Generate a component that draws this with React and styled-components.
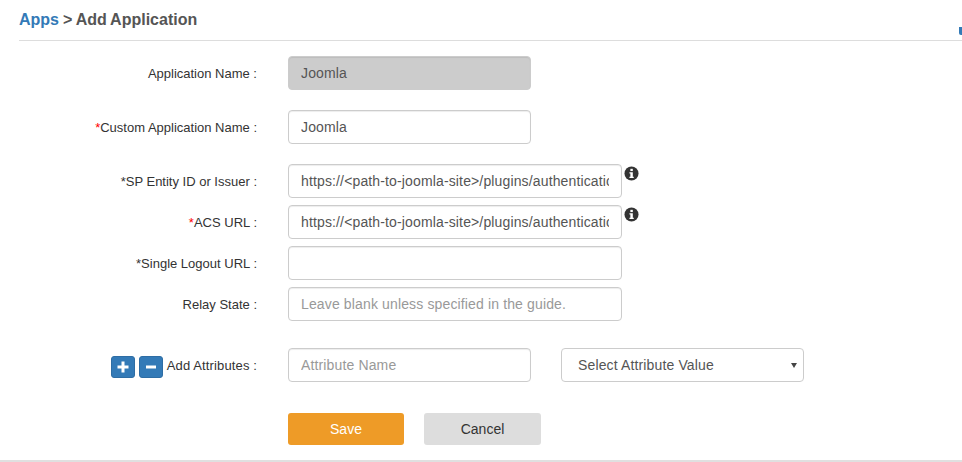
import React from "react";
import styled, { createGlobalStyle } from "styled-components";

const GlobalStyle = createGlobalStyle`
  html, body {
    margin: 0;
    background: #fff;
    overflow: hidden;
  }
  body {
    font-family: "Liberation Sans", Arial, sans-serif;
    font-size: 13px;
    color: #333;
  }
`;

const Page = styled.div`
  position: relative;
  width: 962px;
  height: 462px;
  box-sizing: border-box;
  padding-left: 19px;
  border-bottom: 2px solid #e0e0e0;
  overflow: hidden;
`;

const Header = styled.div`
  height: 40px;
  border-bottom: 1px solid #ddd;
  line-height: 39px;
  font-size: 16px;
  font-weight: bold;
  word-spacing: -0.5px;
  color: #555;
`;

const Crumb = styled.a`
  color: #337ab7;
`;

const EdgeTab = styled.span`
  position: absolute;
  top: 27px;
  right: 0;
  width: 3px;
  height: 8px;
  background: #337ab7;
  border-radius: 0 0 0 2px;
`;

const Form = styled.form`
  display: flex;
  flex-direction: column;
  padding-top: 15px;
`;

const Row = styled.div`
  display: grid;
  grid-template-columns: 238px auto;
  column-gap: 31px;
  justify-content: start;
  align-items: center;
  margin-bottom: ${(p) => p.$gap ?? 7}px;
`;

const Label = styled.label`
  display: flex;
  justify-content: flex-end;
  align-items: center;
  color: #333;
  white-space: nowrap;
`;

const Star = styled.span`
  color: #f00;
`;

const Controls = styled.div`
  display: flex;
  align-items: flex-start;
`;

const Input = styled.input`
  width: ${(p) => p.$w ?? 334}px;
  height: 34px;
  box-sizing: border-box;
  padding: 0 12px;
  border: 1px solid #ccc;
  border-radius: 4px;
  background: ${(p) => (p.disabled ? "#ccc" : "#fff")};
  font: 14px "Liberation Sans", Arial, sans-serif;
  letter-spacing: 0.14px;
  color: #555;
  outline: none;
  box-shadow: inset 0 1px 1px rgba(0, 0, 0, 0.075);

  &::placeholder {
    color: #999;
    opacity: 1;
  }
`;

const InfoIcon = styled.svg`
  width: 15px;
  height: 15px;
  margin: 2px 0 0 2px;
  color: #333;
`;

const SelectBox = styled.div`
  position: relative;
  margin-left: 30px;
  width: 243px;
  height: 34px;
`;

const Select = styled.select`
  appearance: none;
  width: 100%;
  height: 100%;
  box-sizing: border-box;
  padding: 0 16px;
  border: 1px solid #ccc;
  border-radius: 4px;
  background: #fff;
  font: 14px "Liberation Sans", Arial, sans-serif;
  letter-spacing: 0.14px;
  color: #555;
`;

const Caret = styled.span`
  position: absolute;
  top: 15px;
  right: 7px;
  border-left: 3px solid transparent;
  border-right: 3px solid transparent;
  border-top: 5px solid #444;
  pointer-events: none;
`;

const SquareButton = styled.button`
  display: inline-flex;
  align-items: center;
  justify-content: center;
  width: 24px;
  height: 22px;
  margin: 4px 4px 0 0;
  padding: 0;
  border: 1px solid #2e6da4;
  border-radius: 3px;
  background: #337ab7;
  color: #fff;
`;

const AttributeText = styled.span`
  letter-spacing: 0.13px;
`;

const Actions = styled.div`
  display: flex;
  gap: 20px;
  margin-left: 269px;
`;

const ActionButton = styled.button`
  width: ${(p) => p.$w}px;
  height: 32px;
  padding: 0;
  border: 0;
  border-radius: 3px;
  background: ${(p) => p.$bg};
  color: ${(p) => p.$fg};
  font: 14px "Liberation Sans", Arial, sans-serif;
`;

const Info = () => (
  <InfoIcon viewBox="0 0 16 16">
    <circle cx="8" cy="8" r="7.5" fill="currentColor" />
    <rect x="6.8" y="3" width="2.6" height="2.4" fill="#fff" />
    <path d="M5.8 6.6h3.6v4.9h1v1.4H5.8v-1.4h1V8H5.8z" fill="#fff" />
  </InfoIcon>
);

const Plus = () => (
  <svg width="12" height="12" viewBox="0 0 12 12">
    <path d="M4.5 0.500h3v4H11.500v3H7.500v4h-3v-4H0.500v-3h4z" fill="currentColor" />
  </svg>
);

const Minus = () => (
  <svg width="12" height="12" viewBox="0 0 12 12">
    <rect x="1" y="4.500" width="10" height="3" fill="currentColor" />
  </svg>
);

const PATH = "https://<path-to-joomla-site>/plugins/authentication/miniorangesaml";

export default function App() {
  return (
    <Page>
      <GlobalStyle />
      <Header>
        <Crumb>Apps</Crumb> &gt; Add Application
      </Header>
      <EdgeTab />
      <Form>
        <Row $gap={20}>
          <Label>Application Name :</Label>
          <Controls>
            <Input $w={243} disabled value="Joomla" readOnly />
          </Controls>
        </Row>
        <Row $gap={20}>
          <Label>
            <Star>*</Star>Custom Application Name :
          </Label>
          <Controls>
            <Input $w={243} value="Joomla" readOnly />
          </Controls>
        </Row>
        <Row>
          <Label>*SP Entity ID or Issuer :</Label>
          <Controls>
            <Input value={PATH} readOnly />
            <Info />
          </Controls>
        </Row>
        <Row>
          <Label>
            <Star>*</Star>ACS URL :
          </Label>
          <Controls>
            <Input value={PATH} readOnly />
            <Info />
          </Controls>
        </Row>
        <Row>
          <Label>*Single Logout URL :</Label>
          <Controls>
            <Input value="" readOnly />
          </Controls>
        </Row>
        <Row $gap={27}>
          <Label>Relay State :</Label>
          <Controls>
            <Input placeholder="Leave blank unless specified in the guide." />
          </Controls>
        </Row>
        <Row $gap={31}>
          <Label>
            <SquareButton type="button">
              <Plus />
            </SquareButton>
            <SquareButton type="button">
              <Minus />
            </SquareButton>
            <AttributeText>Add Attributes :</AttributeText>
          </Label>
          <Controls>
            <Input $w={243} placeholder="Attribute Name" />
            <SelectBox>
              <Select>
                <option>Select Attribute Value</option>
              </Select>
              <Caret />
            </SelectBox>
          </Controls>
        </Row>
        <Actions>
          <ActionButton type="button" $w={116} $bg="#ee9b27" $fg="#fff">
            Save
          </ActionButton>
          <ActionButton type="button" $w={117} $bg="#ddd" $fg="#333">
            Cancel
          </ActionButton>
        </Actions>
      </Form>
    </Page>
  );
}
